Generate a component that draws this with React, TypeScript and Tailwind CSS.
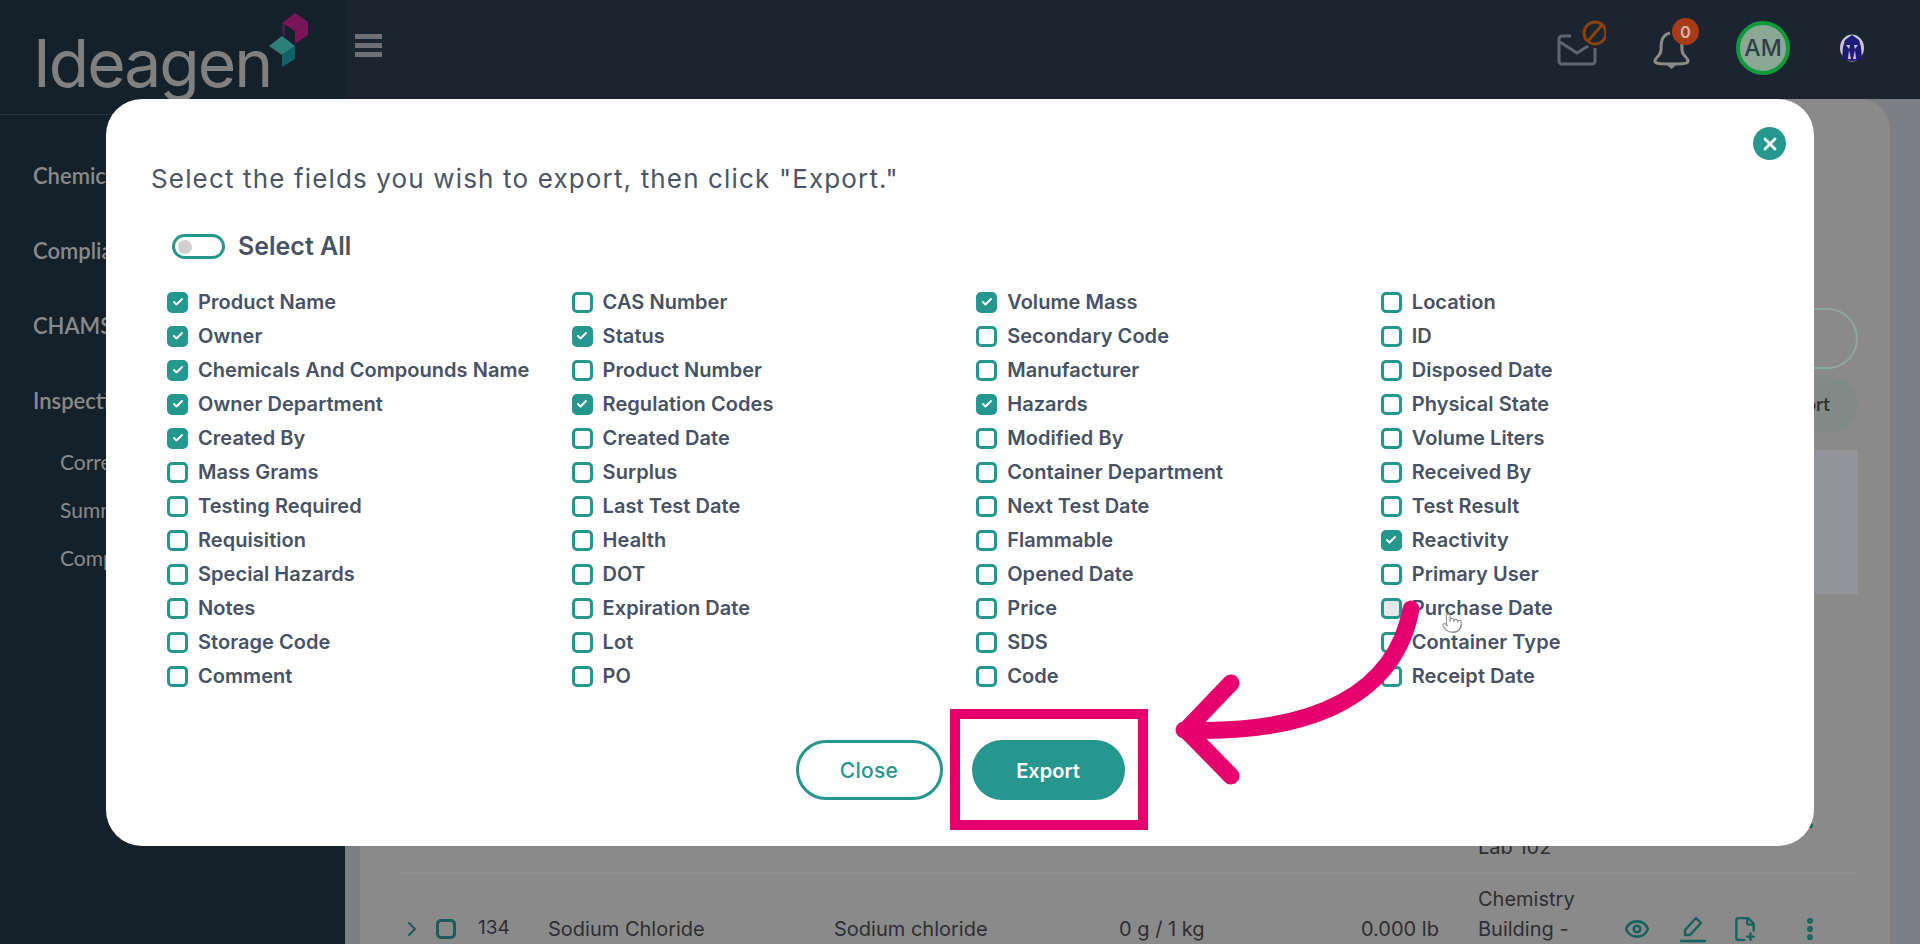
import { Check, ChevronRight, Eye, FilePlus2, MoreVertical, Pointer, X } from 'lucide-react';

const fields = [
  ['Product Name', true], ['Owner', true], ['Chemicals And Compounds Name', true], ['Owner Department', true],
  ['Created By', true], ['Mass Grams', false], ['Testing Required', false], ['Requisition', false],
  ['Special Hazards', false], ['Notes', false], ['Storage Code', false], ['Comment', false],
  ['CAS Number', false], ['Status', true], ['Product Number', false], ['Regulation Codes', true],
  ['Created Date', false], ['Surplus', false], ['Last Test Date', false], ['Health', false],
  ['DOT', false], ['Expiration Date', false], ['Lot', false], ['PO', false],
  ['Volume Mass', true], ['Secondary Code', false], ['Manufacturer', false], ['Hazards', true],
  ['Modified By', false], ['Container Department', false], ['Next Test Date', false], ['Flammable', false],
  ['Opened Date', false], ['Price', false], ['SDS', false], ['Code', false],
  ['Location', false], ['ID', false], ['Disposed Date', false], ['Physical State', false],
  ['Volume Liters', false], ['Received By', false], ['Test Result', false], ['Reactivity', true],
  ['Primary User', false], ['Purchase Date', false], ['Container Type', false], ['Receipt Date', false],
] as [string, boolean][];

const Field = ({ name, checked }: { name: string; checked: boolean }) => (
  <label className="flex items-center gap-[10px] h-[34px]">
    <span
      className={
        'flex items-center justify-center w-[21px] h-[21px] rounded-[5px] border-[3px] border-[#26978f] ' +
        (checked ? 'bg-[#26978f]' : name === 'Purchase Date' ? 'bg-[#e8e8e8]' : 'bg-white')
      }
    >
      {checked && <Check size={12} strokeWidth={4} className="text-white" />}
    </span>
    <span className="text-[20px] font-semibold text-[#475264] font-['Inter',sans-serif] tracking-[0.05px]">{name}</span>
  </label>
);

const Logo = () => (
  <div className="flex items-start h-[115px] pl-[33px] border-b border-[#26323c] overflow-hidden">
    <span className="text-[66px] leading-[80px] mt-[23px] font-normal text-[#808080] tracking-[-2px] font-['Inter',sans-serif]">
      Ideagen
    </span>
    <svg width="60" height="70" viewBox="0 0 60 70" className="ml-[-4px] mt-[10px] shrink-0">
      <polygon points="15,13 28,3 41,12 28,21" fill="#7a1558" />
      <polygon points="28,21 41,12 41,25 28,34" fill="#7a1558" />
      <polygon points="15,13 15,24 18,26 18,15" fill="#4a1a48" />
      <polygon points="2,36 15,26 28,36 15,45" fill="#2e7f7a" />
      <polygon points="15,45 28,36 28,49 15,57" fill="#0f6265" />
    </svg>
  </div>
);

const PencilLine = () => (
  <svg width="26" height="28" viewBox="0 0 26 28" fill="none" stroke="currentColor" strokeWidth="2.4" strokeLinejoin="round" strokeLinecap="round">
    <path d="M5 20 V15 L16 3 L21 8 L10 20 Z" />
    <path d="M1 26 H25" />
  </svg>
);

const TableRow = ({ last }: { last?: boolean }) => (
  <div className="grid grid-cols-[36px_42px_70px_286px_285px_240px_119px_146px_1fr] items-center h-[112px] text-[20px] text-[#2e2e30] border-b border-[#8f8f90] font-['Inter',sans-serif]">
    <ChevronRight size={24} strokeWidth={2} className="text-[#1e5c58]" />
    <span className="w-[20px] h-[20px] rounded-[5px] border-[3px] border-[#1e5c58]" />
    <span className="text-[19px]">134</span>
    <span>Sodium Chloride</span>
    <span>Sodium chloride</span>
    <span>0 g / 1 kg</span>
    <span className="pl-[2px]">0.000 lb</span>
    <div className={'leading-[30px] ' + (last ? 'pb-[30px]' : '')}>
      <div>Chemistry</div>
      <div>Building -</div>
      {!last && <div>Lab 102</div>}
    </div>
    <div className="flex items-center text-[#17625c]">
      <Eye size={26} strokeWidth={2.4} />
      <span className="ml-[30px]">
        <PencilLine />
      </span>
      <FilePlus2 size={26} strokeWidth={2.2} className="ml-[26px]" />
      <MoreVertical size={28} strokeWidth={3} className="ml-[38px]" />
    </div>
  </div>
);

const App = () => {
  return (
    <div className="relative flex w-[1920px] h-[944px] overflow-hidden bg-[#7d7f84] font-['Lato',sans-serif]">
      <aside className="w-[345px] shrink-0 bg-[#15212a] text-[#8a8a8a] text-[22px] font-semibold">
        <Logo />
        <nav className="flex flex-col pl-[33px] mt-[49px] gap-[51px] leading-[24px]">
          <div>Chemicals</div>
          <div>Compliance</div>
          <div>CHAMS</div>
          <div>Inspections</div>
        </nav>
        <div className="flex flex-col pl-[60px] mt-[37px] gap-[24px] leading-[24px] font-normal text-[21px]">
          <div>Corrective</div>
          <div>Summary</div>
          <div>Compliance</div>
        </div>
      </aside>

      <div className="flex-1 flex flex-col">
        <header className="flex items-start h-[99px] bg-[#1b2530] shrink-0">
          <div className="flex flex-col gap-[4px] w-[27px] ml-[10px] mt-[34px]">
            <span className="h-[5px] bg-[#6f7075]" />
            <span className="h-[5px] bg-[#6f7075]" />
            <span className="h-[5px] bg-[#6f7075]" />
          </div>
          <div className="relative ml-auto flex items-start">
            <svg width="54" height="60" viewBox="0 0 54 60" className="mt-[18px]">
              <path d="M19 18 H10 a3 3 0 0 0 -3 3 v22 a3 3 0 0 0 3 3 h30 a3 3 0 0 0 3 -3 V30" fill="none" stroke="#5e6771" strokeWidth="3" />
              <path d="M8 24 L25 35 L36 28" fill="none" stroke="#5e6771" strokeWidth="3" />
              <circle cx="43" cy="15" r="11" fill="#1b2530" stroke="#8c420c" strokeWidth="3" />
              <path d="M36 23 L50 7" stroke="#8c420c" strokeWidth="3" />
            </svg>
            <svg width="44" height="50" viewBox="0 0 44 50" className="ml-[46px] mt-[20px]">
              <path d="M18 13 C9 15 9 24 9 30 C9 36 3 37 3 41 C3 44 8 44 19 44 C30 44 36 44 36 41 C36 37 30 36 30 30 C30 24 30 15 21 13" fill="none" stroke="#8b8b8b" strokeWidth="3" />
              <path d="M15 45 H24 L19.5 49 Z" fill="#8b8b8b" />
            </svg>
            <span className="absolute left-[120px] top-[18px] flex items-center justify-center w-[27px] h-[27px] rounded-full bg-[#a83a18] text-[#dcb8aa] text-[17px] font-bold">
              0
            </span>
            <span className="flex items-center justify-center w-[54px] h-[54px] ml-[40px] mt-[21px] rounded-full border-[4px] border-[#0f9a3c] bg-[#8aa893] text-[#2f3e4e] text-[23px] font-medium font-['Inter',sans-serif]">
              AM
            </span>
            <svg width="24" height="28" viewBox="0 0 24 28" className="ml-[50px] mt-[34px] mr-[56px]">
              <ellipse cx="12" cy="14" rx="12" ry="13.5" fill="#c7c7cf" />
              <path d="M5 6 L12 1 L19 6 L21 13 L22 25 Q12 29 2 25 L3 13 Z" fill="#1f1a78" />
              <path d="M6 11 H10 L9 15 Z M18 11 H14 L15 15 Z" fill="#c7c7cf" />
              <path d="M9 16 L11 25 H8 Z M15 16 L13 25 H16 Z" fill="#c7c7cf" />
            </svg>
          </div>
        </header>

        <main className="flex-1 ml-[15px] mr-[30px] rounded-tr-[30px] bg-[#8a8a8b] pt-[209px] pl-[40px] pr-[32px] min-h-0">
          <div className="ml-auto w-[240px] h-[61px] rounded-full border-2 border-[#92a5a2]" />
          <div className="ml-auto mt-[8px] w-[240px] h-[55px] pr-[28px] rounded-full bg-[#828a88] flex items-center justify-end text-[19px] font-semibold text-[#2e2e30]">
            Export
          </div>
          <div className="mt-[18px] h-[144px] bg-[#92949a]" />
          <div className="mt-[167px]">
            <TableRow />
            <TableRow last />
          </div>
        </main>
      </div>

      <section className="absolute left-[106px] top-[99px] w-[1708px] bg-white rounded-[36px] pt-[64px] pb-[46px]">
        <button className="absolute right-[28px] top-[28px] flex items-center justify-center w-[33px] h-[33px] rounded-full bg-[#26978f] text-white">
          <X size={20} strokeWidth={3.4} />
        </button>
        <h2 className="ml-[45px] text-[26px] leading-[32px] text-[#4a5568] tracking-[1.15px] font-['Inter',sans-serif]">
          Select the fields you wish to export, then click "Export."
        </h2>
        <div className="flex items-center ml-[66px] mt-[39px] h-[25px]">
          <span className="flex items-center w-[53px] h-[25px] rounded-full border-[3px] border-[#26978f] pl-[3px]">
            <span className="w-[14px] h-[14px] rounded-full bg-[#cfcfcf]" />
          </span>
          <span className="ml-[13px] text-[25px] font-semibold text-[#475264] font-['Inter',sans-serif]">Select All</span>
        </div>
        <div className="grid grid-flow-col grid-rows-[repeat(12,34px)] grid-cols-[repeat(4,404.6px)] ml-[61px] mt-[26px]">
          {fields.map(([name, checked]) => (
            <Field key={name} name={name} checked={checked} />
          ))}
        </div>
        <div className="flex justify-center gap-[29px] mt-[47px]">
          <button className="w-[147px] h-[60px] pt-[2px] rounded-full border-[3px] border-[#26978f] bg-white text-[#26978f] text-[21px] font-medium tracking-[0.3px] font-['Inter',sans-serif]">
            Close
          </button>
          <button className="w-[153px] h-[60px] pt-[2px] rounded-full bg-[#26978f] text-white text-[20px] font-semibold font-['Inter',sans-serif]">
            Export
          </button>
        </div>
        <div className="absolute left-[844px] top-[610px] w-[198px] h-[121px] border-[10px] border-[#e6006e]" />
      </section>

      <Pointer size={22} strokeWidth={1.2} className="absolute left-[1441px] top-[612px] text-[#8f8f8f]" />
      <svg width="1920" height="944" viewBox="0 0 1920 944" className="absolute left-0 top-0 pointer-events-none" fill="none">
        <path
          d="M1411 609 C1396 690 1320 735 1184 730 M1231 683 L1186 730 M1186 730 L1231 776"
          stroke="#e6006e"
          strokeWidth="17"
          strokeLinecap="round"
          strokeLinejoin="round"
        />
      </svg>
    </div>
  );
};

export default App;
